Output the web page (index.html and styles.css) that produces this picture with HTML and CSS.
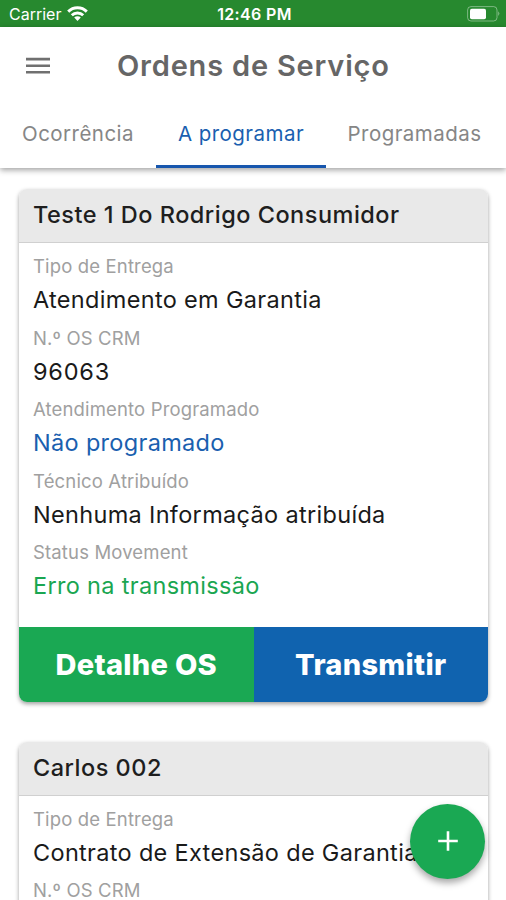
FILE: index.html
```html
<!DOCTYPE html>
<html lang="pt-BR">
<head>
<meta charset="utf-8">
<title>Ordens de Serviço</title>
<link rel="stylesheet" href="styles.css">
</head>
<body>
<div class="screen">
  <div class="status">
    <div class="carrier"><span>Carrier</span>
      <svg class="wifi" width="21" height="16" viewBox="0 0 21 16" fill="none" stroke="#fff" stroke-width="2.9"><path d="M1.2 5.6a13.2 13.2 0 0 1 18.6 0"/><path d="M4.8 9.3a8.1 8.1 0 0 1 11.4 0"/><path d="M10.5 15l-3.3-3.4a4.7 4.7 0 0 1 6.6 0z" fill="#fff" stroke="none"/></svg>
    </div>
    <div class="time">12:46 PM</div>
    <svg class="battery" width="33" height="16" viewBox="0 0 33 16"><rect x=".6" y=".6" width="29.4" height="14.4" rx="3.4" fill="none" stroke="#fff" stroke-opacity=".4"/><rect x="3" y="2.7" width="16" height="10.5" rx="1.8" fill="#fff"/><path d="M31.3 5.3q2 2.3 0 4.6z" fill="#fff" fill-opacity=".5"/></svg>
  </div>
  <header class="appbar">
    <div class="titlebar">
      <svg class="menu" width="24" height="18" viewBox="0 0 24 18" fill="#707070"><path d="M0 .8h24v2.6H0zM0 7.4h24v2.6H0zM0 14h24v2.6H0z"/></svg>
      <h1>Ordens de Serviço</h1>
    </div>
    <nav class="tabs">
      <div class="tab"><span>Ocorrência</span></div>
      <div class="tab active"><span>A programar</span></div>
      <div class="tab"><span>Programadas</span></div>
    </nav>
  </header>
  <main>
    <article class="card">
      <h2>Teste 1 Do Rodrigo Consumidor</h2>
      <dl>
        <dt>Tipo de Entrega</dt><dd>Atendimento em Garantia</dd>
        <dt>N.º OS CRM</dt><dd class="number">96063</dd>
        <dt>Atendimento Programado</dt><dd class="blue">Não programado</dd>
        <dt>Técnico Atribuído</dt><dd>Nenhuma Informação atribuída</dd>
        <dt>Status Movement</dt><dd class="green">Erro na transmissão</dd>
      </dl>
      <div class="actions"><div class="btn detail">Detalhe OS</div><div class="btn send">Transmitir</div></div>
    </article>
    <article class="card">
      <h2>Carlos 002</h2>
      <dl>
        <dt>Tipo de Entrega</dt><dd>Contrato de Extensão de Garantia</dd>
        <dt>N.º OS CRM</dt>
      </dl>
    </article>
  </main>
  <div class="fab"><svg width="20" height="20" viewBox="0 0 20 20" stroke="#fff" stroke-width="2.6"><path d="M10 .2v19.6M.2 10h19.6"/></svg></div>
</div>
</body>
</html>
```
FILE: styles.css
```css
* { box-sizing: border-box; margin: 0; padding: 0; }
body { font-family: Inter, sans-serif; background: #fff; }
.screen { position: relative; width: 506px; height: 900px; overflow: hidden; background: #fff; }
.status { height: 27px; background: #27892f; color: #fff; display: grid; grid-template-columns: 1fr auto 1fr; align-items: center; padding: 1px 6px 0 9px; font-size: 16px; line-height: 26px; }
.carrier { display: flex; align-items: center; gap: 6px; letter-spacing: 0; }
.time { font-weight: 600; letter-spacing: 0.35px; }
.battery { justify-self: end; }
.appbar { height: 141px; background: #fff; box-shadow: 0 2px 6px rgba(0,0,0,.38); }
.titlebar { height: 77px; display: flex; align-items: center; padding: 0 26px; }
h1 { margin-left: 67px; font-size: 29px; font-weight: 600; line-height: 36px; letter-spacing: 0.8px; color: #666; white-space: nowrap; }
.tabs { height: 64px; display: grid; grid-template-columns: 156px 170px 177px; }
.tab { display: flex; justify-content: center; padding-top: 16px; font-size: 20.5px; line-height: 28px; letter-spacing: 0.46px; color: #868686; white-space: nowrap; }
.active { color: #1a5fb0; border-bottom: 3px solid #1756ad; }
main { padding: 21px 18px 0 19px; }
.card { border-radius: 8px; background: #fff; box-shadow: 0 2px 4px rgba(0,0,0,.38); overflow: hidden; margin-bottom: 40px; }
h2 { height: 54px; padding: 0 14px; background: #e9e9e9; border-bottom: 1px solid #d0d0d0; font-size: 23.5px; line-height: 52px; font-weight: 500; letter-spacing: 0.5px; color: #1e1e1e; white-space: nowrap; }
dl { padding: 8px 14px 18px; white-space: nowrap; }
dt { font-size: 18.5px; line-height: 30px; height: 30px; color: #a0a0a0; letter-spacing: 0.15px; }
dd { font-size: 23.5px; line-height: 37px; height: 41.5px; color: #1a1a1a; letter-spacing: 0.32px; }
.number { letter-spacing: 0.8px; }
.blue { color: #1a60af; }
.green { color: #1aa651; }
.actions { display: grid; grid-template-columns: 1fr 1fr; height: 75px; }
.btn { color: #fff; font-size: 29px; font-weight: 800; line-height: 76px; letter-spacing: 0.3px; text-align: center; }
.detail { background: #1aa853; }
.send { background: #1063af; }
.fab { position: absolute; left: 410px; top: 803.5px; width: 75px; height: 75px; border-radius: 50%; background: #1aa853; display: flex; align-items: center; justify-content: center; box-shadow: 0 4px 7px rgba(0,0,0,.35); }
```
